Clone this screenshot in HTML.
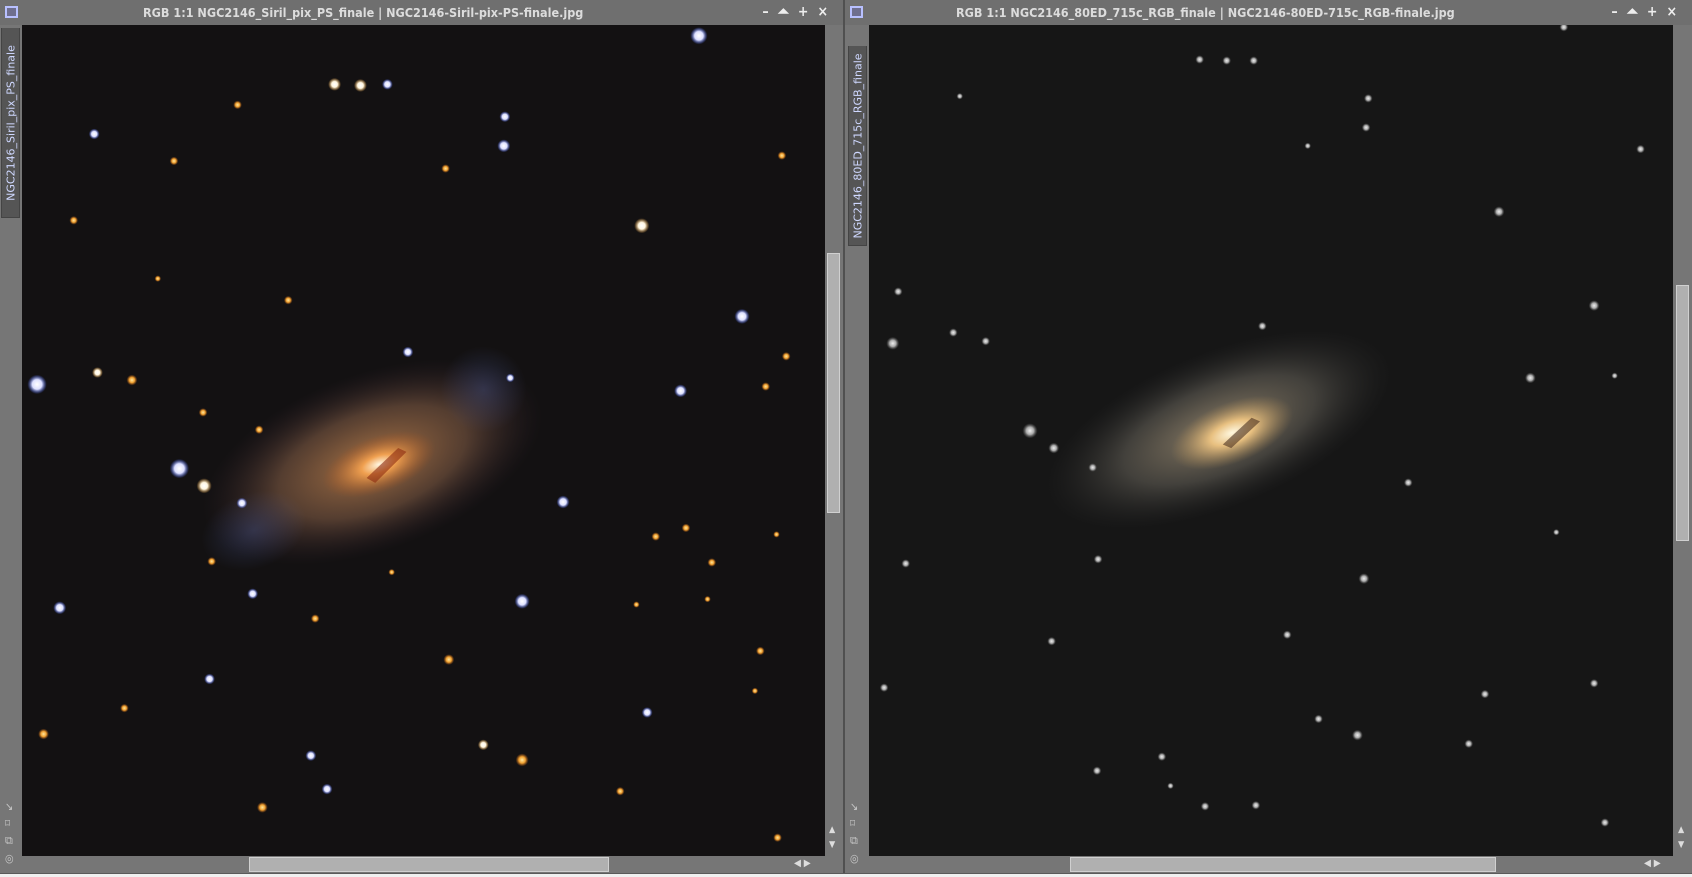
<!DOCTYPE html>
<html><head><meta charset="utf-8">
<style>
*{margin:0;padding:0;box-sizing:border-box}
body{width:1692px;height:877px;background:#f0f0f0;overflow:hidden;position:relative;font-family:"DejaVu Sans Condensed","Liberation Sans",sans-serif}
.win{position:absolute;top:0;height:873px;background:#767676}
.title{position:absolute;left:0;right:0;top:0;height:25px;background:#6f6f6f;color:#dcdcdc;font-size:12.5px;font-weight:bold;line-height:25px;white-space:nowrap}
.ic{position:absolute;left:5px;top:6px;width:13px;height:12px;border:2px solid #b8c0ff;background:#6f6f8f}
.btns{position:absolute;top:0;right:6px;height:25px;color:#eee;font-size:14px;font-weight:bold;line-height:25px;letter-spacing:9px}
.tab{position:absolute;width:19px;background:#555;border:1px solid #444;border-top:none}
.tab span{position:absolute;left:50%;top:50%;transform:translate(-50%,-50%) rotate(-90deg);white-space:nowrap;color:#cfd8ff;font-size:11px;font-family:"DejaVu Sans",sans-serif}
.img{position:absolute;top:25px;height:831px}
.vs{position:absolute;top:25px;width:17px;height:831px;background:#767676}
.thumb{position:absolute;background:#b0b0b0;border:1px solid #d0d0d0}
.hs{position:absolute;top:856px;height:17px;background:#767676}
.sico{position:absolute;left:5px;color:#c8c8c8;font-size:11px}
.arr{position:absolute;color:#ddd;font-size:9px}
</style></head><body>
<svg width="0" height="0" style="position:absolute">
<defs>
<radialGradient id="sw"><stop offset="0" stop-color="#fff"/><stop offset=".45" stop-color="#fff6e0"/><stop offset="1" stop-color="#ffb040" stop-opacity="0"/></radialGradient>
<radialGradient id="sb"><stop offset="0" stop-color="#fff"/><stop offset=".5" stop-color="#dde0ff"/><stop offset="1" stop-color="#4060ff" stop-opacity="0"/></radialGradient>
<radialGradient id="so"><stop offset="0" stop-color="#ffe9a0"/><stop offset=".5" stop-color="#f0a030"/><stop offset="1" stop-color="#c06010" stop-opacity="0"/></radialGradient>
<radialGradient id="sg"><stop offset="0" stop-color="#eee"/><stop offset=".5" stop-color="#aaa"/><stop offset="1" stop-color="#666" stop-opacity="0"/></radialGradient>
<radialGradient id="gal1"><stop offset="0" stop-color="#b07848" stop-opacity=".95"/><stop offset=".55" stop-color="#6a4c3a" stop-opacity=".75"/><stop offset="1" stop-color="#302028" stop-opacity="0"/></radialGradient>
<radialGradient id="core1"><stop offset="0" stop-color="#fff6e0"/><stop offset=".3" stop-color="#f0a050"/><stop offset="1" stop-color="#a05020" stop-opacity="0"/></radialGradient>
<radialGradient id="gal2"><stop offset="0" stop-color="#9a8a70" stop-opacity=".9"/><stop offset=".55" stop-color="#56534c" stop-opacity=".7"/><stop offset="1" stop-color="#2a2a2a" stop-opacity="0"/></radialGradient>
<radialGradient id="core2"><stop offset="0" stop-color="#fff8e0"/><stop offset=".35" stop-color="#e8c080"/><stop offset="1" stop-color="#a08050" stop-opacity="0"/></radialGradient>
<radialGradient id="blu"><stop offset="0" stop-color="#5060a0" stop-opacity=".35"/><stop offset="1" stop-color="#5060a0" stop-opacity="0"/></radialGradient>
</defs></svg>

<!-- LEFT WINDOW -->
<div class="win" style="left:0;width:843px">
 <div class="title" style="padding-left:143px">RGB 1:1 NGC2146_Siril_pix_PS_finale | NGC2146-Siril-pix-PS-finale.jpg</div>
 <div class="ic"></div>
 <div class="btns">–⏶+×</div>
 <div class="tab" style="left:1px;top:28px;height:190px"><span>NGC2146_Siril_pix_PS_finale</span></div>
 <svg class="img" style="left:22px;width:803px" viewBox="20 23 745 770" preserveAspectRatio="none">
  <rect x="20" y="23" width="745" height="770" fill="#131112"/>
  <g transform="rotate(-20 345 428)">
   <ellipse cx="345" cy="428" rx="165" ry="82" fill="url(#gal1)"/>
   <ellipse cx="220" cy="450" rx="50" ry="35" fill="url(#blu)"/>
   <ellipse cx="465" cy="400" rx="40" ry="40" fill="url(#blu)"/>
   <ellipse cx="350" cy="432" rx="55" ry="26" fill="url(#core1)"/>
   <path d="M335 440 L372 424 L378 430 L341 447Z" fill="#8a2a10" opacity=".6"/>
  </g>
  <g>
  <circle cx="648" cy="33" r="8" fill="url(#sb)"/><circle cx="310" cy="78" r="6" fill="url(#sw)"/><circle cx="334" cy="79" r="6" fill="url(#sw)"/><circle cx="359" cy="78" r="5" fill="url(#sb)"/>
  <circle cx="220" cy="97" r="4" fill="url(#so)"/><circle cx="468" cy="108" r="5" fill="url(#sb)"/><circle cx="467" cy="135" r="6" fill="url(#sb)"/><circle cx="87" cy="124" r="5" fill="url(#sb)"/>
  <circle cx="413" cy="156" r="4" fill="url(#so)"/><circle cx="725" cy="144" r="4" fill="url(#so)"/><circle cx="595" cy="209" r="7" fill="url(#sw)"/><circle cx="688" cy="293" r="7" fill="url(#sb)"/>
  <circle cx="34" cy="356" r="9" fill="url(#sb)"/><circle cx="90" cy="345" r="5" fill="url(#sw)"/><circle cx="122" cy="352" r="5" fill="url(#so)"/><circle cx="188" cy="382" r="4" fill="url(#so)"/>
  <circle cx="166" cy="434" r="9" fill="url(#sb)"/><circle cx="189" cy="450" r="7" fill="url(#sw)"/><circle cx="224" cy="466" r="5" fill="url(#sb)"/><circle cx="378" cy="326" r="5" fill="url(#sb)"/>
  <circle cx="631" cy="362" r="6" fill="url(#sb)"/><circle cx="710" cy="358" r="4" fill="url(#so)"/><circle cx="522" cy="465" r="6" fill="url(#sb)"/><circle cx="484" cy="557" r="7" fill="url(#sb)"/>
  <circle cx="234" cy="550" r="5" fill="url(#sb)"/><circle cx="55" cy="563" r="6" fill="url(#sb)"/><circle cx="292" cy="573" r="4" fill="url(#so)"/><circle cx="416" cy="611" r="5" fill="url(#so)"/>
  <circle cx="194" cy="629" r="5" fill="url(#sb)"/><circle cx="115" cy="656" r="4" fill="url(#so)"/><circle cx="40" cy="680" r="5" fill="url(#so)"/><circle cx="288" cy="700" r="5" fill="url(#sb)"/>
  <circle cx="303" cy="731" r="5" fill="url(#sb)"/><circle cx="243" cy="748" r="5" fill="url(#so)"/><circle cx="448" cy="690" r="5" fill="url(#sw)"/><circle cx="484" cy="704" r="6" fill="url(#so)"/>
  <circle cx="600" cy="660" r="5" fill="url(#sb)"/><circle cx="575" cy="733" r="4" fill="url(#so)"/><circle cx="721" cy="776" r="4" fill="url(#so)"/><circle cx="636" cy="489" r="4" fill="url(#so)"/>
  <circle cx="608" cy="497" r="4" fill="url(#so)"/><circle cx="660" cy="521" r="4" fill="url(#so)"/><circle cx="705" cy="603" r="4" fill="url(#so)"/><circle cx="267" cy="278" r="4" fill="url(#so)"/>
  <circle cx="161" cy="149" r="4" fill="url(#so)"/><circle cx="68" cy="204" r="4" fill="url(#so)"/><circle cx="729" cy="330" r="4" fill="url(#so)"/><circle cx="473" cy="350" r="4" fill="url(#sb)"/>
  <circle cx="240" cy="398" r="4" fill="url(#so)"/><circle cx="196" cy="520" r="4" fill="url(#so)"/><circle cx="656" cy="555" r="3" fill="url(#so)"/><circle cx="720" cy="495" r="3" fill="url(#so)"/>
  <circle cx="146" cy="258" r="3" fill="url(#so)"/><circle cx="363" cy="530" r="3" fill="url(#so)"/><circle cx="590" cy="560" r="3" fill="url(#so)"/><circle cx="700" cy="640" r="3" fill="url(#so)"/>
  </g>
 </svg>
 <div class="vs" style="left:825px"><div class="thumb" style="left:2px;top:228px;width:13px;height:260px"></div>
  <div class="arr" style="left:4px;top:800px">▲</div><div class="arr" style="left:4px;top:815px">▼</div></div>
 <div class="hs" style="left:22px;width:821px"><div class="thumb" style="left:227px;top:1px;width:360px;height:15px"></div>
  <div class="arr" style="left:772px;top:2px;font-size:10px">◀ ▶</div></div>
 <div class="sico" style="top:800px">↘</div><div class="sico" style="top:817px">⌑</div><div class="sico" style="top:834px">⧉</div><div class="sico" style="top:852px">◎</div>
</div>
<div style="position:absolute;left:843px;top:0;width:2px;height:873px;background:#505050"></div>

<!-- RIGHT WINDOW -->
<div class="win" style="left:845px;width:847px">
 <div class="title" style="padding-left:111px">RGB 1:1 NGC2146_80ED_715c_RGB_finale | NGC2146-80ED-715c_RGB-finale.jpg</div>
 <div class="ic"></div>
 <div class="btns">–⏶+×</div>
 <div class="tab" style="left:3px;top:46px;height:200px"><span>NGC2146_80ED_715c_RGB_finale</span></div>
 <svg class="img" style="left:24px;width:804px" viewBox="806 23 744 770" preserveAspectRatio="none">
  <rect x="806" y="23" width="744" height="770" fill="#161616"/>
  <g transform="rotate(-22 1130 398)">
   <ellipse cx="1130" cy="398" rx="170" ry="72" fill="url(#gal2)"/>
   <ellipse cx="1140" cy="405" rx="60" ry="28" fill="url(#core2)"/>
   <path d="M1128 412 L1162 399 L1168 405 L1134 418Z" fill="#4a3020" opacity=".6"/>
  </g>
  <g>
  <circle cx="1112" cy="55" r="4" fill="url(#sg)"/><circle cx="1137" cy="56" r="4" fill="url(#sg)"/><circle cx="1162" cy="56" r="4" fill="url(#sg)"/><circle cx="1268" cy="91" r="4" fill="url(#sg)"/>
  <circle cx="1266" cy="118" r="4" fill="url(#sg)"/><circle cx="1389" cy="196" r="5" fill="url(#sg)"/><circle cx="1477" cy="283" r="5" fill="url(#sg)"/><circle cx="1418" cy="350" r="5" fill="url(#sg)"/>
  <circle cx="1520" cy="138" r="4" fill="url(#sg)"/><circle cx="828" cy="318" r="6" fill="url(#sg)"/><circle cx="884" cy="308" r="4" fill="url(#sg)"/><circle cx="914" cy="316" r="4" fill="url(#sg)"/>
  <circle cx="955" cy="399" r="7" fill="url(#sg)"/><circle cx="977" cy="415" r="5" fill="url(#sg)"/><circle cx="1013" cy="433" r="4" fill="url(#sg)"/><circle cx="1170" cy="302" r="4" fill="url(#sg)"/>
  <circle cx="1305" cy="447" r="4" fill="url(#sg)"/><circle cx="1264" cy="536" r="5" fill="url(#sg)"/><circle cx="1018" cy="518" r="4" fill="url(#sg)"/><circle cx="840" cy="522" r="4" fill="url(#sg)"/>
  <circle cx="975" cy="594" r="4" fill="url(#sg)"/><circle cx="1193" cy="588" r="4" fill="url(#sg)"/><circle cx="820" cy="637" r="4" fill="url(#sg)"/><circle cx="1258" cy="681" r="5" fill="url(#sg)"/>
  <circle cx="1222" cy="666" r="4" fill="url(#sg)"/><circle cx="1077" cy="701" r="4" fill="url(#sg)"/><circle cx="1017" cy="714" r="4" fill="url(#sg)"/><circle cx="1376" cy="643" r="4" fill="url(#sg)"/>
  <circle cx="1361" cy="689" r="4" fill="url(#sg)"/><circle cx="1449" cy="25" r="4" fill="url(#sg)"/><circle cx="1477" cy="633" r="4" fill="url(#sg)"/><circle cx="1487" cy="762" r="4" fill="url(#sg)"/>
  <circle cx="1117" cy="747" r="4" fill="url(#sg)"/><circle cx="1164" cy="746" r="4" fill="url(#sg)"/><circle cx="833" cy="270" r="4" fill="url(#sg)"/><circle cx="1442" cy="493" r="3" fill="url(#sg)"/>
  <circle cx="1085" cy="728" r="3" fill="url(#sg)"/><circle cx="890" cy="89" r="3" fill="url(#sg)"/><circle cx="1212" cy="135" r="3" fill="url(#sg)"/><circle cx="1496" cy="348" r="3" fill="url(#sg)"/>
  </g>
 </svg>
 <div class="vs" style="left:828px;width:19px"><div class="thumb" style="left:3px;top:260px;width:13px;height:256px"></div>
  <div class="arr" style="left:5px;top:800px">▲</div><div class="arr" style="left:5px;top:815px">▼</div></div>
 <div class="hs" style="left:24px;width:823px"><div class="thumb" style="left:201px;top:1px;width:426px;height:15px"></div>
  <div class="arr" style="left:775px;top:2px;font-size:10px">◀ ▶</div></div>
 <div class="sico" style="top:800px">↘</div><div class="sico" style="top:817px">⌑</div><div class="sico" style="top:834px">⧉</div><div class="sico" style="top:852px">◎</div>
</div>
<div style="position:absolute;left:0;top:873px;width:1692px;height:1px;background:#5a5a5a"></div>
</body></html>
